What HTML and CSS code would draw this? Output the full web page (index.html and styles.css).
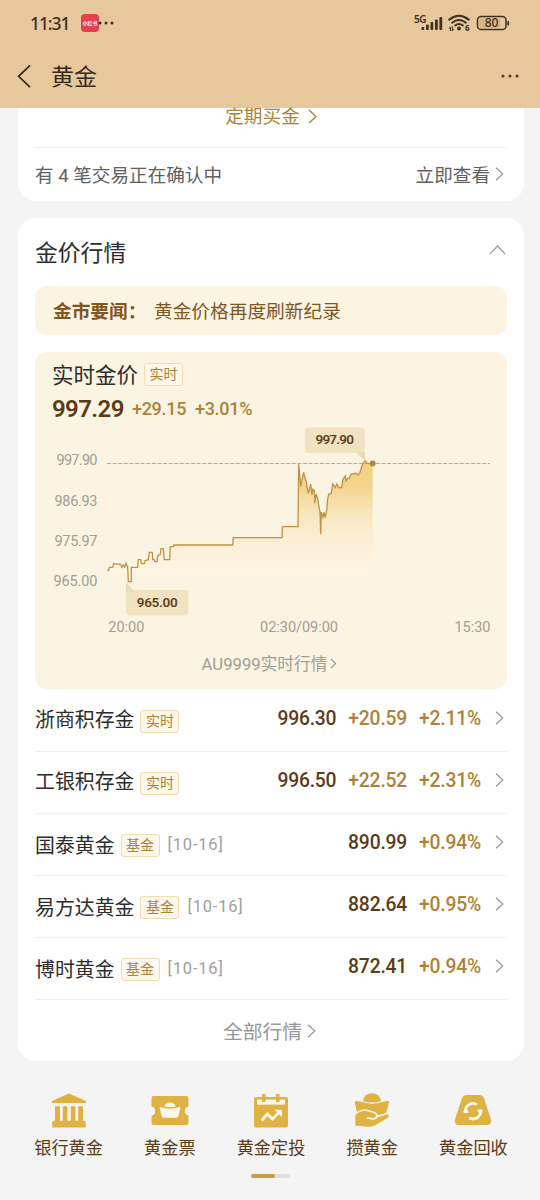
FILE: index.html
```html
<!DOCTYPE html>
<html lang="zh-CN">
<head>
    <meta charset="UTF-8">
    <meta name="viewport" content="width=device-width, initial-scale=1.0">
    <title>黄金</title>
    <link rel="stylesheet" href="styles.css">
</head>
<body>
    <header class="header">
        <div class="status-bar">
            <span class="time">11:31</span>
            <span class="app-badge">小红书</span>
            <svg class="status-dots" width="16" height="4" viewBox="0 0 16 4"><circle cx="2" cy="2" r="1.5"/><circle cx="8" cy="2" r="1.5"/><circle cx="14" cy="2" r="1.5"/></svg>
            <svg class="status-icons" width="98" height="20" viewBox="0 0 98 20">
                <text class="net" x="1" y="10" textLength="12.5">5G</text>
                <g fill="#3d301f">
                    <rect x="8.5" y="14" width="2.8" height="3" rx="1"/>
                    <rect x="13" y="11.5" width="2.8" height="5.5" rx="1"/>
                    <rect x="17.5" y="9" width="2.8" height="8" rx="1"/>
                    <rect x="22" y="6.5" width="2.8" height="10.5" rx="1"/>
                    <rect x="26.4" y="4" width="2.8" height="13" rx="1"/>
                    <circle cx="46" cy="15.5" r="1.9"/>
                    <path d="M37.700 13.200l-2.300 2.300h1.500V18h1.400zM39.100 18.200l2.300-2.300h-1.500v-2.400h-1.200z"/>
                </g>
                <g fill="none" stroke="#3d301f" stroke-width="2" stroke-linecap="round">
                    <path d="M36.200 6.600Q46-1 55.800 6.600"/>
                    <path d="M39.100 9.700Q46 4.300 52.900 9.700"/>
                    <path d="M42.100 12.500Q46 9.600 49.900 12.500"/>
                </g>
                <text class="wifi-gen" x="52" y="18">6</text>
                <rect x="64.500" y="3.500" width="28.500" height="13" rx="3.600" fill="none" stroke="#3d301f" stroke-width="1.500"/>
                <rect x="66.500" y="5.500" width="20.500" height="9" rx="2" fill="#d4b58b"/>
                <rect x="94.300" y="8" width="1.800" height="4.400" rx=".9" fill="#3d301f"/>
                <text class="battery" x="71.800" y="14.300" textLength="13.500">80</text>
            </svg>
        </div>
        <div class="nav-bar">
            <svg width="14" height="24" viewBox="0 0 14 24"><path d="M13 1.300L1.600 12.300 13 23.200" fill="none" stroke="#33291c" stroke-width="1.700"/></svg>
            <h1>黄金</h1>
            <svg class="more" width="18" height="4" viewBox="0 0 18 4"><circle cx="2" cy="2" r="1.600"/><circle cx="9" cy="2" r="1.600"/><circle cx="16" cy="2" r="1.600"/></svg>
        </div>
    </header>

    <main>
        <section class="card order-card">
            <div class="plan-link">定期买金<svg width="9" height="15" viewBox="0 0 9 15"><path d="M1 1l7 6.500L1 14"/></svg></div>
            <div class="pending">
                <span>有 4 笔交易正在确认中</span>
                <span class="check">立即查看<svg class="chevron" width="9" height="14" viewBox="0 0 9 14"><path d="M1 .7L7.800 7 1 13.300"/></svg></span>
            </div>
        </section>

        <section class="card market-card">
            <div class="market-head">
                <h2>金价行情</h2>
                <svg class="chevron" width="17" height="10" viewBox="0 0 17 10"><path d="M.8 9.200L8.500 1l7.700 8.200"/></svg>
            </div>
            <div class="news"><b>金市要闻：</b><span>黄金价格再度刷新纪录</span></div>

            <div class="chart-card">
                <div class="chart-title"><span>实时金价</span><span class="tag">实时</span></div>
                <div class="quote">
                    <span class="now">997.29</span>
                    <span class="diff">+29.15</span>
                    <span class="diff">+3.01%</span>
                </div>
                <svg class="chart" width="472" height="220" viewBox="35 421 472 220">
                    <defs>
                        <linearGradient id="fade" gradientUnits="userSpaceOnUse" x1="0" y1="461" x2="0" y2="582">
                            <stop offset="0" stop-color="#f3cf80"/>
                            <stop offset=".22" stop-color="#f3d086" stop-opacity=".9"/>
                            <stop offset=".5" stop-color="#f7deaa" stop-opacity=".5"/>
                            <stop offset=".72" stop-color="#fdebd0" stop-opacity=".4"/>
                            <stop offset="1" stop-color="#fff6e8" stop-opacity=".15"/>
                        </linearGradient>
                    </defs>
                    <g class="grid">
                        <path d="M107 501.500H490M107 541.500H490M107 581.500H490"/>
                    </g>
                    <path fill="url(#fade)" d="M107.3 570.3h1.4l.6-3h3.4l1-3.6 7 .6 1 3 1.6-2.3 1.4 2.3 1.3-4 1.7 3.7.6 14.7h3v-14.4h6.4l.6-7.6h2.4l.6 4h3l.7-3 3.3-1 1-7.4h3l.4 7.4h1.6l.4 2h2.3l.7-5.7 2.6-1.7.7-5.6h2.3l1 11h5.4l.6-13h3l.7-1.7h58.7l.6-7.3H282l.5-11H298l.7-62.4 2 22.4 1.3-7.4 1.7-7 1.3 6 1.3 3.4 1 6.6 1 5 2.4-9.3 1.3 11 1-5.7 1.4 1.3.3 12.7 1.3-9.3 2 6 1 7.3 1 4.4.7 22.6.6-22 1.700 5 1-5 1.300 5.400 1.400-7.700 1-11 1-4.700 2.600-1 1.400-9.300 2.600 3.700 1.400-3.700 2.300 3.700h2.700l1.300-8.400 2.300-3.300.7 5 1.700-2.700h1.600l1.700-4.300 5-.7 2 1.700 2-2.700 2-6.600 1.700-3.400 1.600-1.600 2 2.600 5.400.4V581.500H107.300z"/>
                    <path class="top-line" d="M107 463.500H490"/>
                    <path class="price-line" d="M107.3 570.3h1.4l.6-3h3.4l1-3.6 7 .6 1 3 1.6-2.3 1.4 2.3 1.3-4 1.7 3.7.6 14.7h3v-14.4h6.4l.6-7.6h2.4l.6 4h3l.7-3 3.3-1 1-7.4h3l.4 7.4h1.6l.4 2h2.3l.7-5.7 2.6-1.7.7-5.6h2.3l1 11h5.4l.6-13h3l.7-1.7h58.7l.6-7.3H282l.5-11H298l.7-62.4 2 22.4 1.3-7.4 1.7-7 1.3 6 1.3 3.4 1 6.6 1 5 2.4-9.3 1.3 11 1-5.7 1.4 1.3.3 12.7 1.3-9.3 2 6 1 7.3 1 4.4.7 22.6.6-22 1.700 5 1-5 1.300 5.400 1.400-7.700 1-11 1-4.700 2.600-1 1.400-9.300 2.600 3.700 1.400-3.700 2.300 3.700h2.700l1.300-8.400 2.300-3.300.7 5 1.700-2.700h1.600l1.700-4.300 5-.7 2 1.700 2-2.700 2-6.600 1.700-3.400 1.600-1.600 2 2.600 5.400.4"/>
                    <circle cx="372.600" cy="463.600" r="3" fill="#b4873a"/>
                    <rect class="bubble" x="305" y="427.500" width="60" height="25.500" rx="4"/>
                    <path class="bubble-tail" d="M356 452h9v9z"/>
                    <rect class="bubble" x="126" y="590" width="62.500" height="25.500" rx="4"/>
                    <path class="bubble-tail" d="M126 582v10h9z"/>
                    <g class="bubble-text">
                        <text x="315.500" y="444" textLength="38.500">997.90</text>
                        <text x="136.700" y="607" textLength="41">965.00</text>
                    </g>
                    <g class="axis">
                        <text x="56.500" y="465.300" textLength="41">997.90</text>
                        <text x="54.500" y="505.500" textLength="43">986.93</text>
                        <text x="54.500" y="545.500" textLength="43">975.97</text>
                        <text x="53.500" y="585.500" textLength="44">965.00</text>
                        <text x="108.300" y="631.800" textLength="36">20:00</text>
                        <text x="260" y="631.800" textLength="78">02:30/09:00</text>
                        <text x="454.500" y="631.800" textLength="36">15:30</text>
                    </g>
                </svg>
                <div class="chart-more">AU9999实时行情<svg class="chevron" width="7" height="11" viewBox="0 0 7 11"><path d="M1 .8l4.600 4.700L1 10.200"/></svg></div>
            </div>

            <ul class="quotes">
                <li>
                    <span class="name">浙商积存金</span><span class="tag">实时</span>
                    <span class="price">996.30</span><span class="change">+20.59</span><span class="change">+2.11%</span>
                    <svg class="chevron" width="9" height="14" viewBox="0 0 9 14"><path d="M1 .7L7.800 7 1 13.300"/></svg>
                </li>
                <li>
                    <span class="name">工银积存金</span><span class="tag">实时</span>
                    <span class="price">996.50</span><span class="change">+22.52</span><span class="change">+2.31%</span>
                    <svg class="chevron" width="9" height="14" viewBox="0 0 9 14"><path d="M1 .7L7.800 7 1 13.300"/></svg>
                </li>
                <li class="fund">
                    <span class="name">国泰黄金</span><span class="tag">基金</span><span class="date">[10-16]</span>
                    <span class="price">890.99</span><span class="change">+0.94%</span>
                    <svg class="chevron" width="9" height="14" viewBox="0 0 9 14"><path d="M1 .7L7.800 7 1 13.300"/></svg>
                </li>
                <li class="fund">
                    <span class="name">易方达黄金</span><span class="tag">基金</span><span class="date">[10-16]</span>
                    <span class="price">882.64</span><span class="change">+0.95%</span>
                    <svg class="chevron" width="9" height="14" viewBox="0 0 9 14"><path d="M1 .7L7.800 7 1 13.300"/></svg>
                </li>
                <li class="fund">
                    <span class="name">博时黄金</span><span class="tag">基金</span><span class="date">[10-16]</span>
                    <span class="price">872.41</span><span class="change">+0.94%</span>
                    <svg class="chevron" width="9" height="14" viewBox="0 0 9 14"><path d="M1 .7L7.800 7 1 13.300"/></svg>
                </li>
            </ul>
            <div class="all-quotes">全部行情<svg class="chevron" width="9" height="14" viewBox="0 0 9 14"><path d="M1 .7L7.800 7 1 13.300"/></svg></div>
        </section>
    </main>

    <nav class="bottom-nav">
        <a>
            <svg width="38" height="36" viewBox="0 0 38 36">
                <path d="M19 .4L36 8v2H2V8zM5 13.300h5v14.500H5zM12.800 13.300h4.600v14.500h-4.600zM20.800 13.300h4.600v14.500h-4.600zM28.200 13.300h4.800v14.500h-4.800zM2.200 29.600q0-1.800 1.800-1.800h30q1.800 0 1.800 1.800v4.800H2.200z"/>
            </svg>
            <span>银行黄金</span>
        </a>
        <a>
            <svg width="38" height="36" viewBox="0 0 38 36">
                <path d="M2.500 3h33q2 0 2 2v8.500a4.600 4.600 0 0 0 0 9V30q0 2-2 2h-33q-2 0-2-2v-7.500a4.600 4.600 0 0 0 0-9V5q0-2 2-2z"/>
                <path class="cut" d="M8.500 13.800q10.500 4 21 0l-2 9.200q-.4 1.700-2.200 1.700H12.700q-1.800 0-2.200-1.700z"/>
                <path class="cut" d="M13.300 13.500q1.200-4 5.700-4t5.700 4q-5.700 1.600-11.400 0z"/>
            </svg>
            <span>黄金票</span>
        </a>
        <a>
            <svg width="38" height="36" viewBox="0 0 38 36">
                <path d="M4 4h30q2 0 2 2v26.500q0 2-2 2H4q-2 0-2-2V6q0-2 2-2z"/>
                <path class="cut" d="M5 6.600h28v5H5z"/>
                <path d="M10 1h3.600v8H10zM24 1h3.600v8H24z"/>
                <path class="cut-line" d="M9.500 27.500l6-6.500 5 5 7.500-7.500"/>
                <path class="cut" d="M22.500 16.800H30V24z"/>
            </svg>
            <span>黄金定投</span>
        </a>
        <a>
            <svg width="38" height="36" viewBox="0 0 38 36">
                <path d="M10 8.200Q11 .2 19 .2t9 8q-9 2.400-18 0z"/>
                <path d="M1.600 9.500q0-1.800 2-1.600l3.400.7q12 4.200 24.500 0l3-.7q2-.2 1.600 1.600l-4.200 15.300H5.400z"/>
                <path class="edge" d="M1.500 21.500q8-5.800 13-4l6.500 1.900q3.200 1.200 3 4.200l8.500-2.600q3.700-1 4.300 1.200.4 1.700-1.800 3.100l-10.500 6.700q-4 2.900-9 2.600L3.300 33.500q-1.800-.2-1.800-2z"/>
                <path class="crease" d="M14.500 25.200l6 .7q2.500 0 3-2"/>
            </svg>
            <span>攒黄金</span>
        </a>
        <a>
            <svg width="38" height="36" viewBox="0 0 38 36">
                <path d="M13 2h12q3.600 0 5 3.300l6.800 20.500q1.600 6-3.800 6.200H5q-5.400-.2-3.800-6.200L8 5.300Q9.400 2 13 2z"/>
                <path class="arc" d="M11.600 20A7.600 7.600 0 0 1 22.800 11.600M26.400 16.400A7.600 7.600 0 0 1 15.200 24.800"/>
                <path class="cut" d="M8.600 19.200l4-3.900 2.600 4.700zM29.400 17.200l-4 3.900-2.600-4.700z"/>
            </svg>
            <span>黄金回收</span>
        </a>
    </nav>
    <div class="pager"><i></i></div>
</body>
</html>
```
FILE: styles.css
```css
:root {
    --bar: #e7c79c;
    --page: #f4f4f4;
    --cream: #fcf4e2;
    --gold: #ae8237;
    --brown: #5c3b17;
    --icon: #e0b244;
}

* {
    margin: 0;
    padding: 0;
    box-sizing: border-box;
}

body {
    width: 540px;
    height: 1200px;
    overflow: hidden;
    background: var(--page);
    font-family: Roboto, "Noto Sans CJK SC", sans-serif;
    color: #2d2d2d;
}

svg {
    display: block;
    flex-shrink: 0;
}

/* header */
.header {
    height: 108px;
    background: var(--bar);
}

.status-bar {
    display: flex;
    align-items: center;
    height: 46px;
    padding: 0 29px 0 30px;
}

.time {
    width: 51px;
    font-family: "Noto Sans", sans-serif;
    font-size: 17.5px;
    font-weight: 500;
    letter-spacing: -1.1px;
    color: #3d301f;
}

.app-badge {
    width: 18px;
    height: 18px;
    border-radius: 4px;
    background: #e43f4b;
    color: #fff;
    font-size: 5px;
    font-weight: 700;
    line-height: 18px;
    text-align: center;
    white-space: nowrap;
}

.status-dots {
    margin-left: -1px;
    fill: #3d301f;
}

.status-icons {
    margin-left: auto;
    margin-top: -1px;
}

.status-icons text {
    font-family: "Noto Sans", sans-serif;
    font-weight: 600;
    fill: #3d301f;
}

.status-icons .net {
    font-size: 10px;
}

.status-icons .wifi-gen {
    font-size: 8px;
    font-weight: 700;
}

.status-icons .battery {
    font-size: 12px;
    font-weight: 500;
}

.nav-bar {
    display: flex;
    align-items: center;
    height: 60px;
    padding: 0 21px 0 17px;
}

.nav-bar h1 {
    margin: -3px 0 0 20px;
    font-size: 23px;
    font-weight: 400;
    color: #33291c;
}

.more {
    margin-left: auto;
    fill: #5a4028;
}

/* cards */
.card {
    width: 506px;
    margin-left: 18px;
    padding: 0 17px;
    border-radius: 18px;
    background: #fff;
}

.chevron {
    fill: none;
    stroke: #979797;
    stroke-width: 1.2;
}

.order-card {
    height: 93px;
    border-radius: 0 0 18px 18px;
}

.plan-link {
    display: flex;
    justify-content: center;
    gap: 8px;
    height: 40px;
    border-bottom: 1px solid #f1f1f1;
    color: var(--gold);
    font-size: 18.7px;
    line-height: 19px;
}

.plan-link svg {
    margin-top: 1px;
    fill: none;
    stroke: var(--gold);
    stroke-width: 1.4;
}

.pending {
    display: flex;
    justify-content: space-between;
    align-items: center;
    height: 52px;
    padding: 0 3px 1px 0;
    font-size: 18.6px;
    color: #616161;
}

.check {
    display: flex;
    align-items: center;
    gap: 5px;
}

.market-card {
    height: 843px;
    margin-top: 17px;
}

.market-head {
    display: flex;
    justify-content: space-between;
    align-items: center;
    height: 68px;
    padding: 0 1px 2px 0;
}

.market-head h2 {
    font-size: 22.8px;
    font-weight: 400;
}

.market-head svg {
    margin-top: -2px;
}

.news {
    display: flex;
    align-items: center;
    height: 49px;
    padding: 0 0 2px 18px;
    border-radius: 12px;
    background: var(--cream);
    color: #80571f;
    font-size: 18.7px;
}

.news b {
    width: 101px;
    font-weight: 700;
}

/* chart */
.chart-card {
    height: 337px;
    margin-top: 17px;
    border-radius: 12px;
    background: var(--cream);
}

.chart-title {
    display: flex;
    align-items: center;
    gap: 6px;
    height: 44px;
    padding-left: 17px;
    font-size: 21.5px;
}

.chart-title span:first-child {
    margin-top: -2px;
}

.tag {
    flex-shrink: 0;
    width: 39px;
    height: 23px;
    border: 1px solid #efdcb0;
    border-radius: 3px;
    background: #fdf7ec;
    color: var(--gold);
    font-size: 14px;
    line-height: 20px;
    text-align: center;
}

.quote {
    display: flex;
    align-items: center;
    height: 25px;
    padding-left: 17px;
}

.now {
    width: 80px;
    color: var(--brown);
    font-size: 24px;
    font-weight: 600;
    letter-spacing: -0.6px;
}

.diff {
    width: 63px;
    color: var(--gold);
    font-size: 18px;
    font-weight: 500;
    letter-spacing: -0.3px;
}

.grid path {
    stroke: #f4ecdf;
    stroke-dasharray: 4 4;
}

.top-line {
    stroke: #c9a766;
    stroke-dasharray: 4 1.6;
}

.price-line {
    fill: none;
    stroke: #bf9343;
    stroke-width: 1.3;
}

.bubble {
    fill: #f1e2c2;
}

.bubble-tail {
    fill: #eadbb8;
}

.bubble-text {
    fill: #5f411c;
    font-size: 13.5px;
    font-weight: 600;
}

.axis {
    fill: #a19d94;
    font-size: 14.5px;
}

.chart-more {
    display: flex;
    justify-content: center;
    align-items: center;
    gap: 3px;
    height: 44px;
    padding-right: 3px;
    color: #a19d94;
    font-size: 16.7px;
}

/* quote list */
.quotes {
    margin-top: 1px;
    list-style: none;
}

.quotes li {
    display: flex;
    align-items: center;
    height: 62px;
    padding: 0 3px 4px 0;
    border-bottom: 1px solid #f1f1f1;
}

.name {
    font-size: 19.9px;
}

.quotes .tag {
    margin: 5px 0 0 6px;
}

.fund .name,
.fund .date {
    margin-top: 3px;
}

.date {
    margin-left: 8px;
    color: #a0a0a0;
    font-size: 16.5px;
    letter-spacing: 0.8px;
}

.price {
    margin-left: auto;
    color: var(--brown);
    font-size: 19.3px;
    font-weight: 500;
    letter-spacing: -0.2px;
}

.change {
    margin-left: 12px;
    color: var(--gold);
    font-size: 19.3px;
    font-weight: 500;
    letter-spacing: -0.2px;
}

.quotes .chevron {
    margin: -2px 0 0 14px;
}

.all-quotes {
    display: flex;
    justify-content: center;
    align-items: center;
    gap: 5px;
    height: 61px;
    padding-right: 3px;
    color: #989898;
    font-size: 19.8px;
}

/* bottom nav */
.bottom-nav {
    display: flex;
    width: 506px;
    margin: 32px 0 0 18px;
}

.bottom-nav a {
    display: flex;
    flex: 1;
    flex-direction: column;
    align-items: center;
    color: var(--brown);
    font-size: 17.2px;
    line-height: 24px;
}

.bottom-nav svg {
    margin-bottom: 7px;
    fill: var(--icon);
}

.bottom-nav .cut {
    fill: #fdf8ea;
}

.bottom-nav .cut-line,
.bottom-nav .arc {
    fill: none;
    stroke: #fdf8ea;
    stroke-width: 2.8;
}

.bottom-nav .edge {
    stroke: #f8f2e4;
    stroke-width: 1.6;
}

.bottom-nav .crease {
    fill: none;
    stroke: #fdf8ea;
    stroke-width: 1.7;
    stroke-linecap: round;
}

.pager {
    width: 39px;
    height: 4px;
    margin: 14px auto 0;
    border-radius: 2px;
    background: #dedede;
}

.pager i {
    display: block;
    width: 24px;
    height: 4px;
    border-radius: 2px;
    background: #cb9d43;
}
```
